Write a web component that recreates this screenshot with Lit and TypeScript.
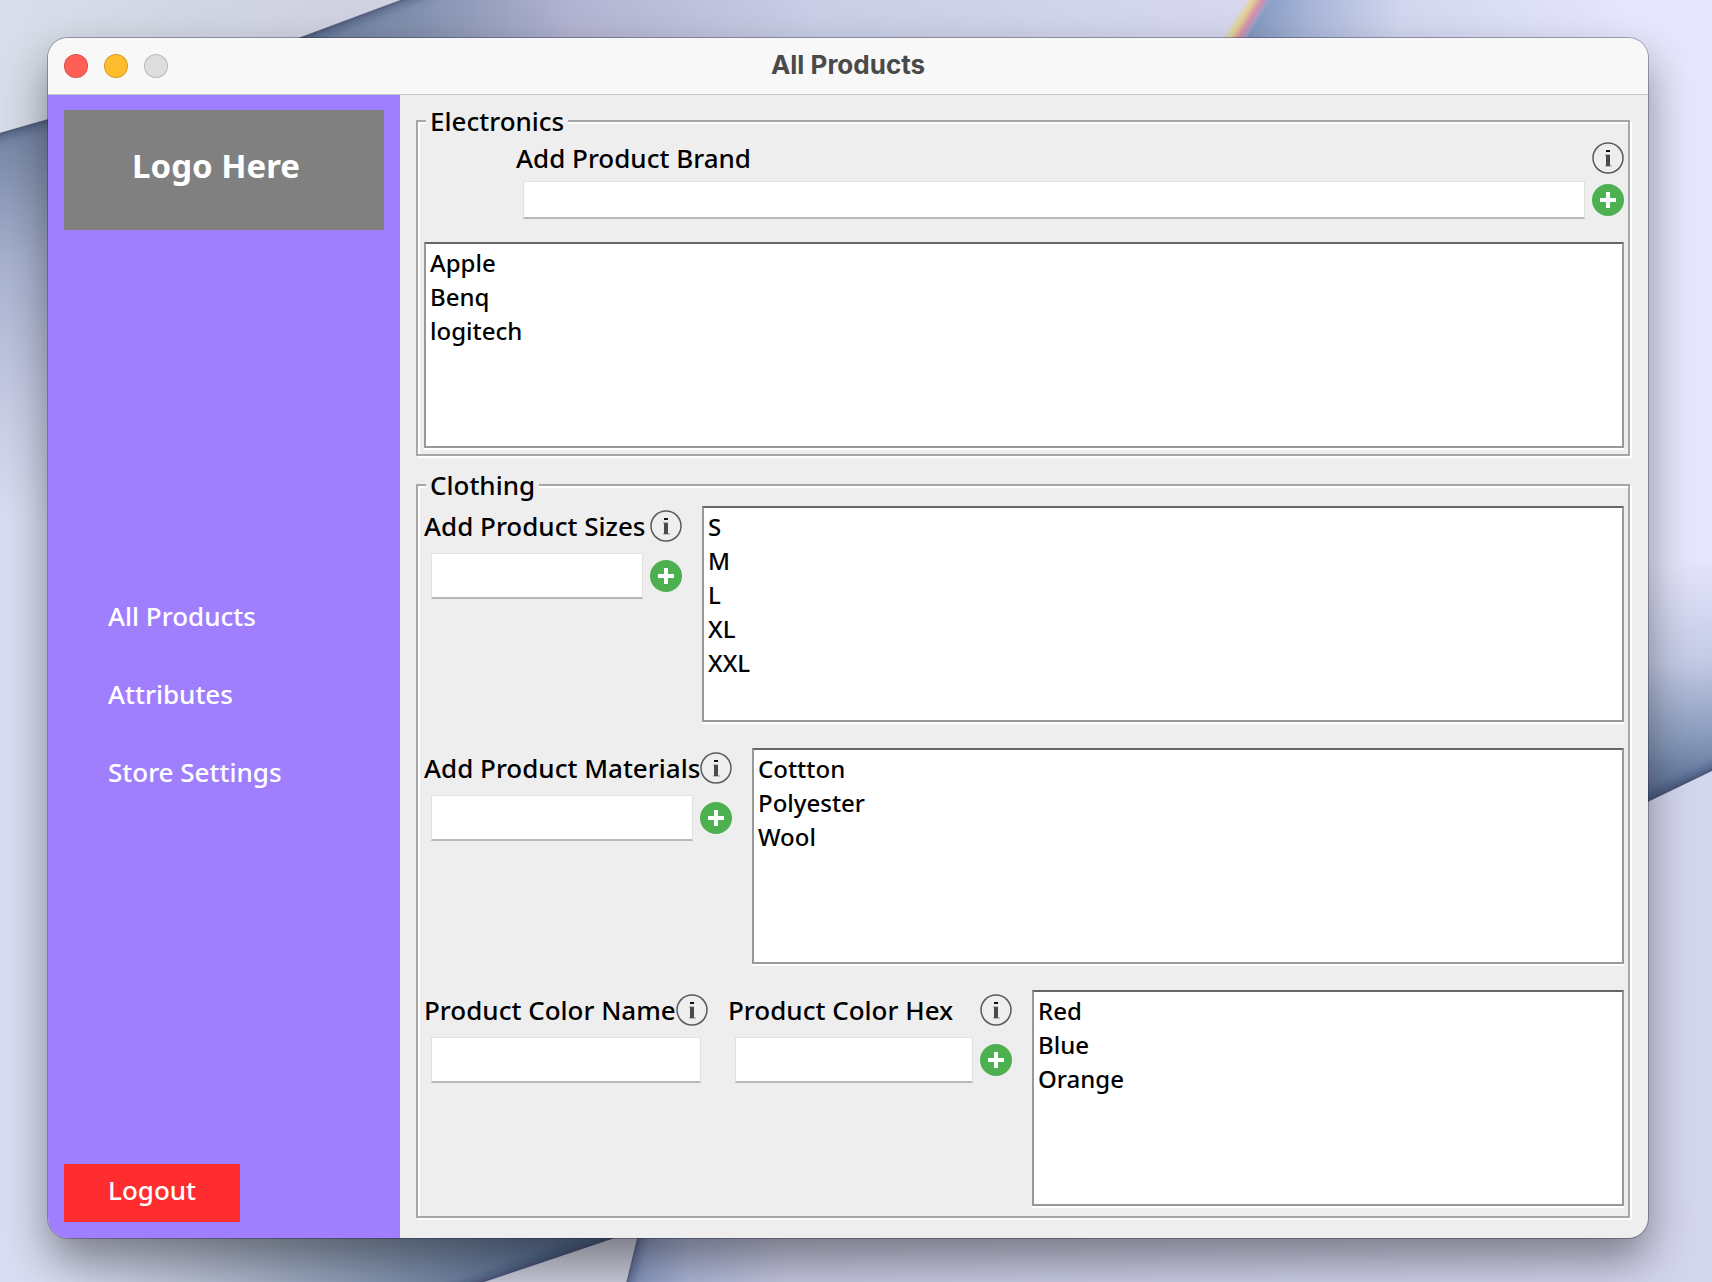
import { LitElement, html, css } from "lit";
import { customElement } from "lit/decorators.js";

const wallpaper = html`<svg class="wallpaper" viewBox="0 0 1712 1282" preserveAspectRatio="none" aria-hidden="true">
  <defs>
    <linearGradient id="sheet" gradientUnits="userSpaceOnUse" x1="0" y1="0" x2="300" y2="120">
      <stop offset="0" stop-color="#d9dfea"></stop><stop offset="0.5" stop-color="#d2d7e4"></stop><stop offset="1" stop-color="#d0d1e0"></stop>
    </linearGradient>
    <linearGradient id="top" gradientUnits="userSpaceOnUse" x1="290" y1="0" x2="1240" y2="0">
      <stop offset="0" stop-color="#6c7d9c"></stop><stop offset="0.14" stop-color="#8492b0"></stop>
      <stop offset="0.3" stop-color="#b3b4d2"></stop><stop offset="0.55" stop-color="#c8cee5"></stop><stop offset="1" stop-color="#d7d8ee"></stop>
    </linearGradient>
    <linearGradient id="topRight" gradientUnits="userSpaceOnUse" x1="1255" y1="0" x2="1620" y2="60">
      <stop offset="0" stop-color="#8398c0"></stop><stop offset="0.15" stop-color="#a8b5d8"></stop>
      <stop offset="0.4" stop-color="#d2d7ef"></stop><stop offset="1" stop-color="#e6e6fc"></stop>
    </linearGradient>
    <linearGradient id="left" gradientUnits="userSpaceOnUse" x1="20" y1="120" x2="0" y2="520">
      <stop offset="0" stop-color="#6f809f"></stop><stop offset="0.35" stop-color="#a7b1cf"></stop>
      <stop offset="0.7" stop-color="#c6cbe4"></stop><stop offset="1" stop-color="#d9ddf1"></stop>
    </linearGradient>
    <linearGradient id="right" gradientUnits="userSpaceOnUse" x1="1670" y1="560" x2="1690" y2="785">
      <stop offset="0" stop-color="#e6e6fc"></stop><stop offset="0.45" stop-color="#c4cbe6"></stop>
      <stop offset="0.8" stop-color="#8799bb"></stop><stop offset="1" stop-color="#5f7499"></stop>
    </linearGradient>
    <linearGradient id="lowerLeft" gradientUnits="userSpaceOnUse" x1="0" y1="0" x2="560" y2="0">
      <stop offset="0.1" stop-color="#d9ddf1"></stop><stop offset="0.35" stop-color="#b8c0d4"></stop>
      <stop offset="0.7" stop-color="#8192ae"></stop><stop offset="1" stop-color="#566c92"></stop>
    </linearGradient>
    <linearGradient id="lowerRight" gradientUnits="userSpaceOnUse" x1="625" y1="0" x2="1712" y2="0">
      <stop offset="0" stop-color="#7f91bb"></stop><stop offset="0.06" stop-color="#acb5d6"></stop>
      <stop offset="0.15" stop-color="#c5c7e0"></stop><stop offset="1" stop-color="#d4d6ee"></stop>
    </linearGradient>
    <linearGradient id="prism" gradientUnits="userSpaceOnUse" x1="1229" y1="26" x2="1247" y2="37">
      <stop offset="0" stop-color="#d7d8ee"></stop><stop offset="0.35" stop-color="#e3d290"></stop>
      <stop offset="0.7" stop-color="#d58fae"></stop><stop offset="1" stop-color="#93a3ca"></stop>
    </linearGradient>
    <filter id="cast" x="-20%" y="-20%" width="140%" height="140%">
      <feDropShadow dx="0" dy="0" stdDeviation="7" flood-color="#16223f" flood-opacity="0.85"></feDropShadow>
    </filter>
  </defs>
  <rect width="1712" height="1282" fill="#d8daf0"></rect>
  <path d="M250 0H1290L1200 120H250z" fill="url(#top)"></path>
  <path d="M1267 0H1712V640H1180V130z" fill="url(#topRight)"></path>
  <path d="M1247 0h24l-46 70h-24z" fill="url(#prism)"></path>
  <path d="M0 100H100V1100H0z" fill="url(#left)"></path>
  <path d="M1600 540H1712V830H1600z" fill="url(#right)"></path>
  <path d="M1600 825L1760 748V1160H1600z" fill="#d4d6ee" filter="url(#cast)"></path>
  <path d="M0 1000H640V1282H0z" fill="url(#lowerLeft)"></path>
  <path d="M1560 1100H1712V1210H1560z" fill="#d4d6ee"></path>
  <path d="M620 1200H1712V1282H610z" fill="url(#lowerRight)"></path>
  <path d="M-60 -60H561L298 38L48 119L-60 150z" fill="url(#sheet)" filter="url(#cast)"></path>
  <path d="M650 1226L615 1238L360 1324H616L637 1238z" fill="#cacbdb" filter="url(#cast)"></path>
</svg>`;

const infoIcon = html`<svg class="icon" viewBox="0 0 32 32" aria-hidden="true">
  <circle cx="16" cy="16" r="15" fill="none" stroke="#5a5a5a" stroke-width="1.500"></circle>
  <rect x="14" y="8" width="4" height="2" fill="#111"></rect>
  <path d="M13 12h5v11h2v2h-7v-2h1v-9h-1z" fill="#bdbdbd"></path>
  <rect x="14" y="13" width="4" height="11" fill="#4a4a4a"></rect>
</svg>`;

const addIcon = html`<svg class="icon" viewBox="0 0 32 32" aria-hidden="true">
  <circle cx="16" cy="16" r="16" fill="#4caf50"></circle>
  <path d="M14 8h4v6h6v4h-6v6h-4v-6H8v-4h6z" fill="#fff"></path>
</svg>`;

const infoButton = (about: string, place = "") =>
  html`<button class="icon-button info ${place}" type="button" aria-label="About ${about}">${infoIcon}</button>`;
const addButton = (what: string, place = "") =>
  html`<button class="icon-button add ${place}" type="button" aria-label="Add ${what}">${addIcon}</button>`;
const list = (name: string, items: string[]) => html`<ul class="list" aria-label=${name}>
  ${items.map((item) => html`<li class="item">${item}</li>`)}
</ul>`;

@customElement("app-root")
export class AppRoot extends LitElement {
  static styles = css`
    :host {
      display: block;
      font-family: "Noto Sans", "Open Sans", sans-serif;
      font-size: 26px;
      font-weight: 500;
      color: #000;
    }
    * { box-sizing: border-box; }
    .desktop {
      position: relative;
      display: flex;
      min-height: 100vh;
      padding: 38px 64px 44px 48px;
      overflow: hidden;
    }
    .wallpaper {
      position: absolute;
      inset: 0;
      width: 100%;
      height: 100%;
    }
    .window {
      position: relative;
      flex: 1;
      display: flex;
      flex-direction: column;
      border-radius: 20px;
      overflow: hidden;
      background: #eee;
      box-shadow: 0 0 0 1px rgba(30, 30, 60, 0.35), 0 22px 44px rgba(20, 20, 20, 0.45);
    }
    .titlebar {
      display: grid;
      grid-template-columns: 1fr auto 1fr;
      align-items: center;
      height: 57px;
      padding: 0 16px;
      background: #f8f8f8;
      border-bottom: 1px solid #c6c6c6;
    }
    .lights { display: flex; gap: 16px; }
    .light {
      width: 24px;
      height: 24px;
      padding: 0;
      border: 1px solid rgba(0, 0, 0, 0.16);
      border-radius: 50%;
    }
    .close { background: #ff5f57; }
    .minimize { background: #febc2e; }
    .zoom { background: #dedede; }
    .title {
      margin: 0;
      padding-bottom: 2px;
      font-family: Inter, sans-serif;
      font-size: 26px;
      line-height: 30px;
      font-weight: 700;
      color: #4a4a4a;
    }
    .body { flex: 1; display: flex; }
    .sidebar {
      width: 352px;
      display: flex;
      flex-direction: column;
      padding: 15px 16px 16px;
      background: #a07fff;
      color: #fff;
    }
    .logo {
      display: flex;
      justify-content: center;
      align-items: center;
      height: 120px;
      padding: 0 16px 8px 0;
      background: #808080;
      font-size: 33px;
      line-height: 40px;
      font-weight: 700;
    }
    .nav {
      flex: 1;
      display: flex;
      flex-direction: column;
      justify-content: center;
      gap: 20px;
    }
    .nav-link {
      height: 58px;
      padding-left: 44px;
      line-height: 52px;
      color: #fff;
      text-decoration: none;
    }
    .logout {
      width: 176px;
      height: 58px;
      padding: 0 0 6px 44px;
      border: 0;
      background: #ff2d2f;
      color: #fff;
      font: inherit;
      text-align: left;
    }
    .content {
      flex: 1;
      min-width: 0;
      display: flex;
      flex-direction: column;
      gap: 14px;
      padding: 11px 18px 20px 16px;
    }
    .group {
      min-width: 0;
      margin: 0;
      padding: 6px 4px 6px 6px;
      border: 2px solid #a6a6a6;
      box-shadow: inset 2px 2px 0 #fff, 2px 2px 0 #fff;
    }
    .legend {
      margin-left: 2px;
      padding: 0 4px;
      line-height: 30px;
      background: #eee;
    }
    .brand {
      display: grid;
      grid-template-columns: 1fr 32px;
      grid-template-rows: 32px 38px;
      row-gap: 7px;
      align-items: center;
      padding-left: 92px;
      margin-bottom: 23px;
    }
    .brand-list { display: grid; height: 206px; }
    .clothing { flex: 1; padding-bottom: 10px; }
    .rows {
      height: 100%;
      display: grid;
      grid-auto-rows: minmax(216px, 1fr);
      gap: 26px;
    }
    .row {
      display: grid;
      grid-template-rows: 40px 60px 1fr;
      align-items: center;
    }
    .sizes { grid-template-columns: 226px 32px 20px 1fr; }
    .materials { grid-template-columns: 276px 32px 20px 1fr; }
    .colors { grid-template-columns: 252px 32px 20px 252px 32px 20px 1fr; }
    .row .list {
      grid-row: 1 / -1;
      grid-column: -2;
    }
    .row .label, .row .info { grid-row: 1; }
    .row .field, .row .add { grid-row: 2; }
    .first { grid-column: 1; }
    .wide { grid-column: 1 / 3; }
    .after-first { grid-column: 2; }
    .second { grid-column: 4; }
    .after-second { grid-column: 5; }
    .label { line-height: 32px; white-space: nowrap; }
    .field {
      align-self: center;
      height: 46px;
      min-width: 0;
      margin: 0 7px;
      padding: 0 8px;
      border: 1px solid #e2e2e2;
      border-bottom: 2px solid #b8b8b8;
      border-radius: 0;
      background: #fff;
      font: inherit;
    }
    .brand .field { height: 38px; }
    .icon-button {
      width: 32px;
      height: 32px;
      padding: 0;
      border: 0;
      background: none;
    }
    .icon { display: block; width: 32px; height: 32px; }
    .list {
      align-self: stretch;
      margin: 0;
      padding: 2px 4px;
      list-style: none;
      background: #fff;
      border: 2px solid #999;
      border-top-color: #666;
      box-shadow: 0 2px 0 #fff;
      font-size: 24px;
    }
    .item { line-height: 34px; }
  `;

  render() {
    return html`<div class="desktop">
      ${wallpaper}
      <section class="window">
        <header class="titlebar">
          <div class="lights">
            <button class="light close" type="button" aria-label="Close"></button>
            <button class="light minimize" type="button" aria-label="Minimize"></button>
            <button class="light zoom" type="button" aria-label="Zoom"></button>
          </div>
          <h1 class="title">All Products</h1>
        </header>
        <div class="body">
          <aside class="sidebar">
            <div class="logo">Logo Here</div>
            <nav class="nav">
              ${["All Products", "Attributes", "Store Settings"].map(
                (name) => html`<a class="nav-link" href="#">${name}</a>`
              )}
            </nav>
            <button class="logout" type="button">Logout</button>
          </aside>
          <main class="content">
            <fieldset class="group">
              <legend class="legend">Electronics</legend>
              <div class="brand">
                <label class="label" for="brand">Add Product Brand</label>
                ${infoButton("brands")}
                <input class="field" id="brand" type="text">
                ${addButton("brand")}
              </div>
              <div class="brand-list">${list("Brands", ["Apple", "Benq", "logitech"])}</div>
            </fieldset>
            <fieldset class="group clothing">
              <legend class="legend">Clothing</legend>
              <div class="rows">
                <div class="row sizes">
                  <label class="label first" for="size">Add Product Sizes</label>
                  ${infoButton("sizes", "after-first")}
                  <input class="field first" id="size" type="text">
                  ${addButton("size", "after-first")}
                  ${list("Sizes", ["S", "M", "L", "XL", "XXL"])}
                </div>
                <div class="row materials">
                  <label class="label first" for="material">Add Product Materials</label>
                  ${infoButton("materials", "after-first")}
                  <input class="field first" id="material" type="text">
                  ${addButton("material", "after-first")}
                  ${list("Materials", ["Cottton", "Polyester", "Wool"])}
                </div>
                <div class="row colors">
                  <label class="label first" for="color-name">Product Color Name</label>
                  ${infoButton("color names", "after-first")}
                  <label class="label second" for="color-hex">Product Color Hex</label>
                  ${infoButton("color hex values", "after-second")}
                  <input class="field wide" id="color-name" type="text">
                  <input class="field second" id="color-hex" type="text">
                  ${addButton("color", "after-second")}
                  ${list("Colors", ["Red", "Blue", "Orange"])}
                </div>
              </div>
            </fieldset>
          </main>
        </div>
      </section>
    </div>`;
  }
}
